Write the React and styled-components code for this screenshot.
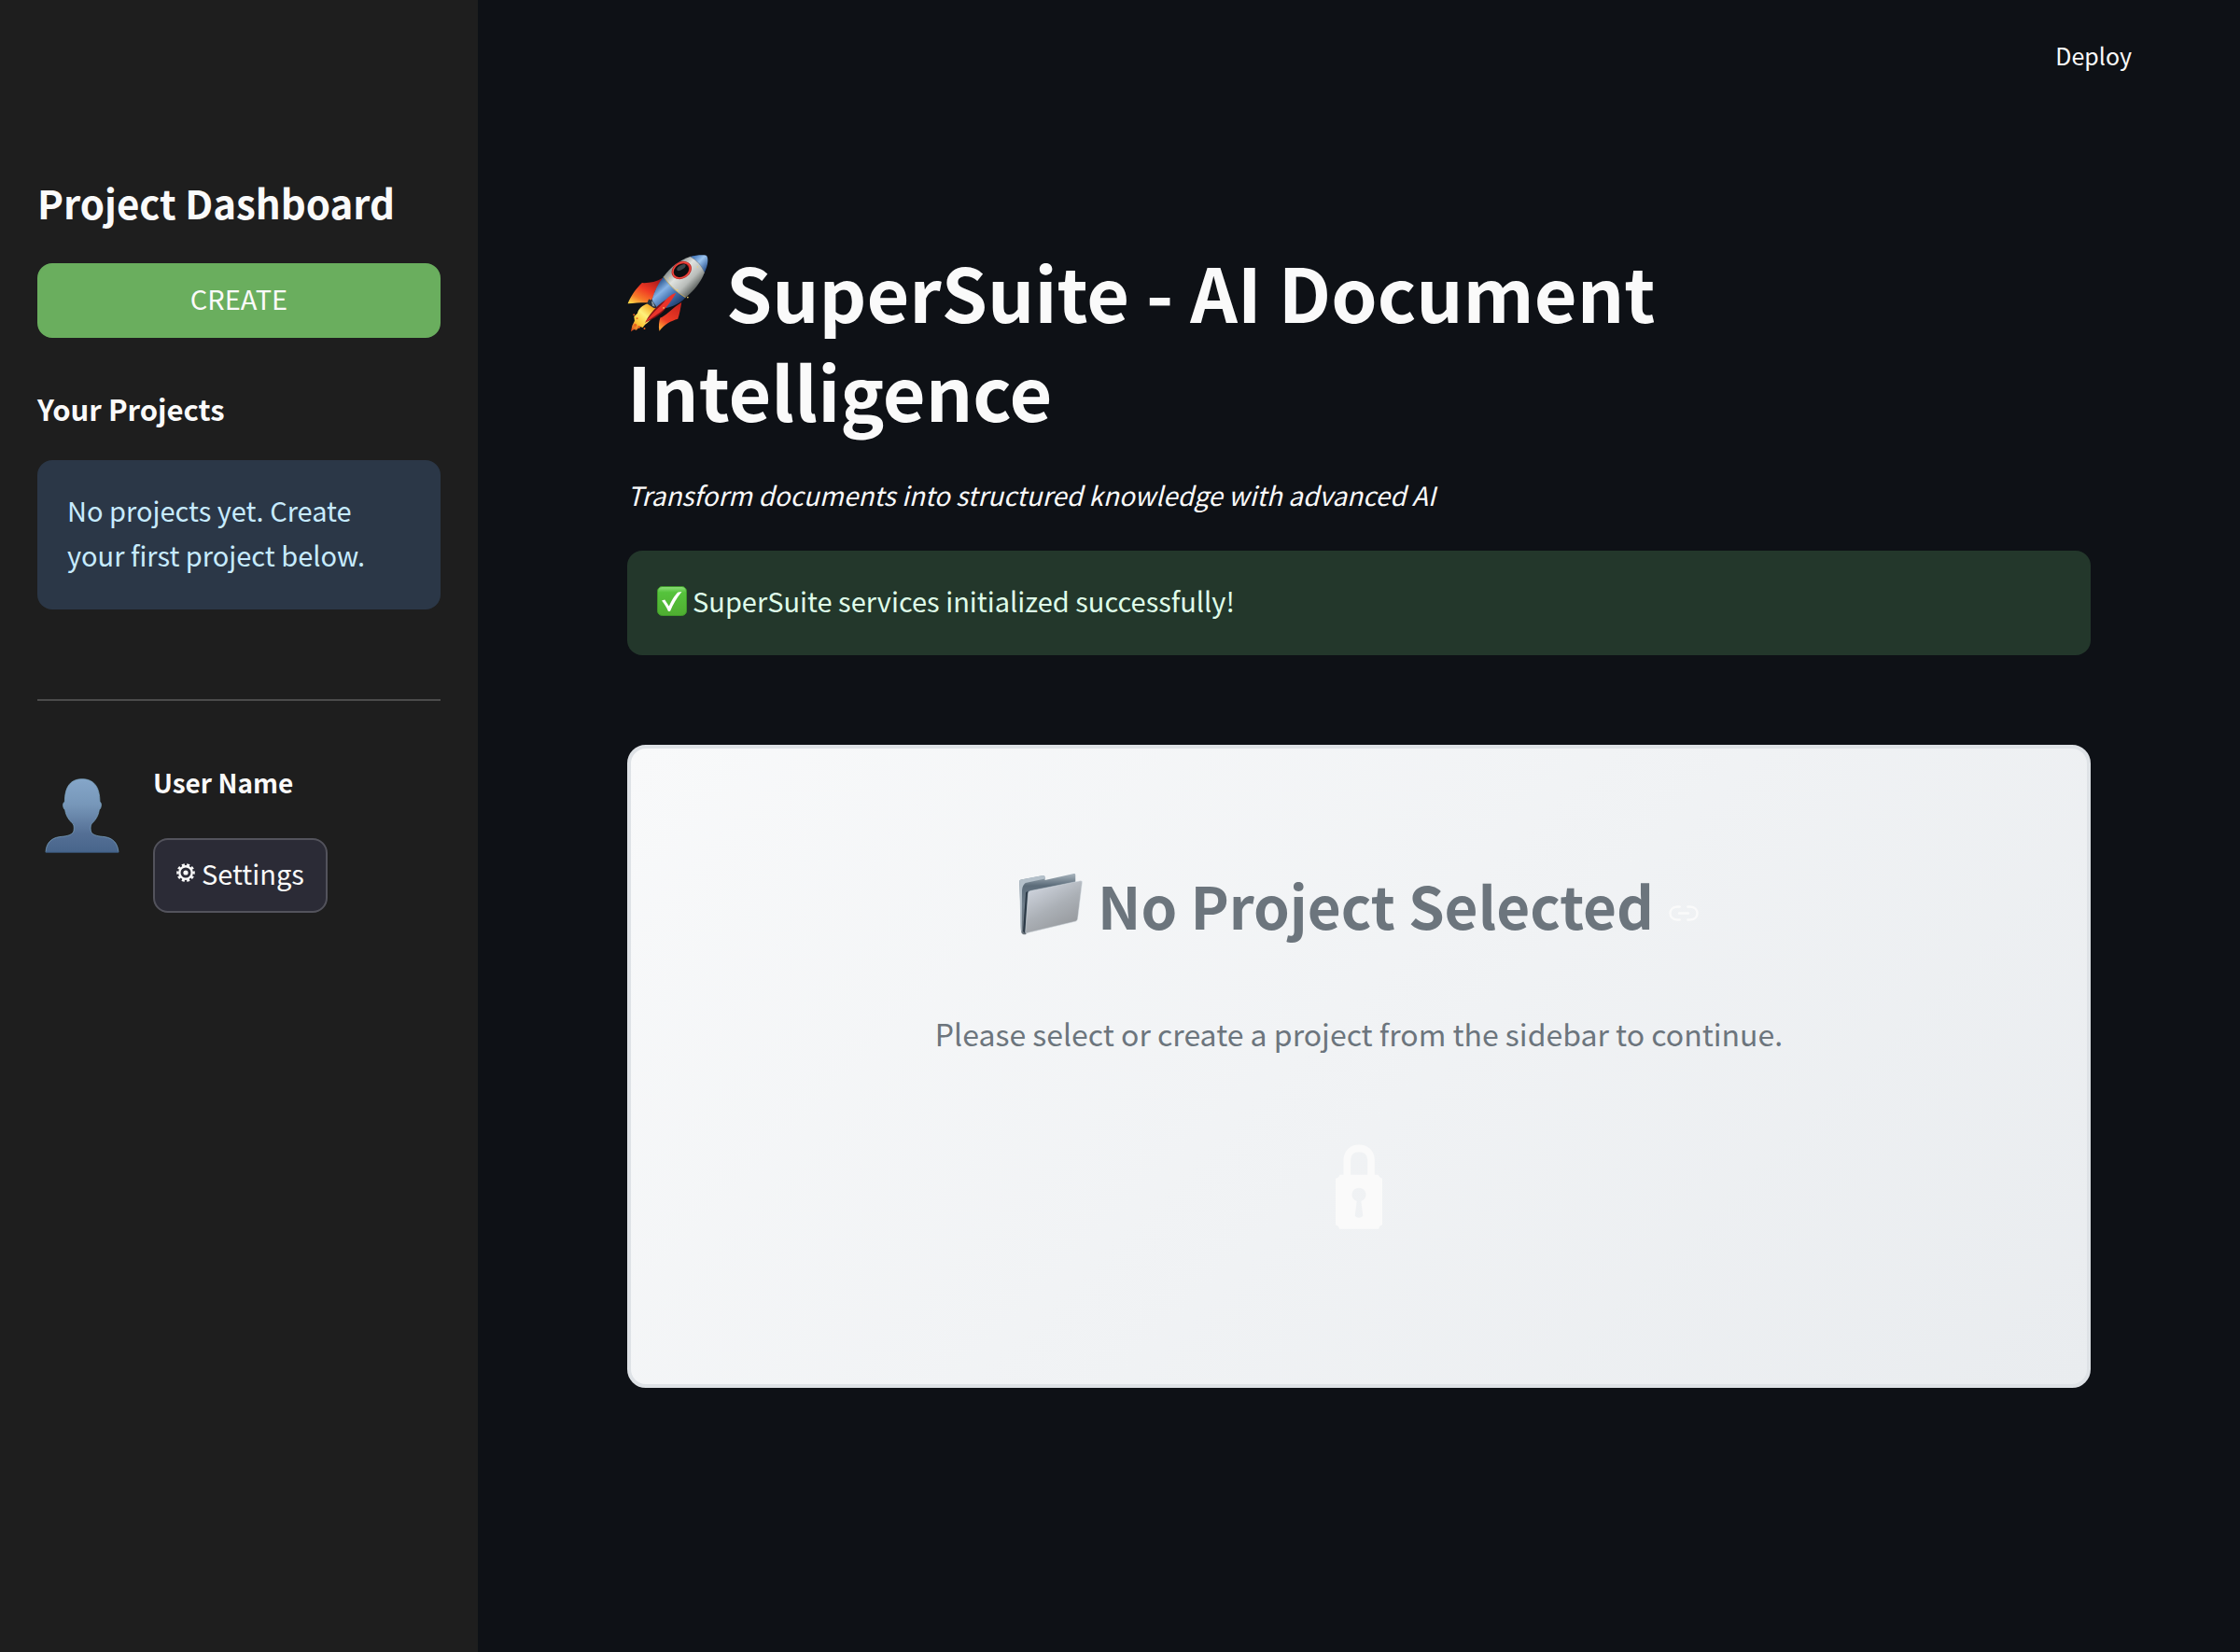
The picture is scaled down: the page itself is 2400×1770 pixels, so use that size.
import React from "react";
import styled, { createGlobalStyle } from "styled-components";

const GlobalStyle = createGlobalStyle`
  *, *::before, *::after { box-sizing: border-box; }
  body {
    margin: 0;
    background: #0e1116;
    color: #fafafa;
    font-family: "Noto Sans CJK SC", "Noto Sans", sans-serif;
    font-size: 29px;
    line-height: 48px;
  }
  h1, h2, h3, p { margin: 0; }
  button { font: inherit; color: inherit; cursor: pointer; }
`;

const Page = styled.div`
  display: flex;
  min-height: 100vh;
`;

const Sidebar = styled.aside`
  flex: 0 0 512px;
  padding: 188px 40px 40px;
  background: #1e1e1e;
`;

const SidebarTitle = styled.h2`
  font-size: 42px;
  line-height: 58px;
  font-weight: 600;
  margin-bottom: 36px;
`;

const Button = styled.button`
  display: flex;
  align-items: center;
  justify-content: center;
  gap: 7px;
  width: ${(p) => (p.$wide ? "100%" : "auto")};
  height: 80px;
  padding: 0 23px 6px;
  border: 2px solid ${(p) => (p.$primary ? "#6aae5e" : "#53535c")};
  border-radius: 16px;
  background: ${(p) => (p.$primary ? "#6aae5e" : "#2b2b36")};
`;

const SectionTitle = styled.h3`
  margin: 54px 0 33px;
  font-size: 31px;
  line-height: 44px;
  font-weight: 600;
`;

const Alert = styled.div`
  padding: 29px 32px 35px;
  border-radius: 16px;
  background: ${(p) => (p.$success ? "#23372b" : "#2b3747")};
  color: ${(p) => (p.$success ? "#dffde9" : "#c7ebff")};
`;

const Divider = styled.hr`
  height: 2px;
  margin: 96px 0 63px;
  border: 0;
  background: #4b4b4b;
`;

const UserRow = styled.div`
  display: flex;
  gap: 36px;
  padding-left: 8px;
`;

const Avatar = styled.svg`
  flex: none;
  width: 80px;
  height: 80px;
  margin-top: 20px;
`;

const UserInfo = styled.div`
  display: flex;
  flex-direction: column;
  align-items: flex-start;
  gap: 36px;
`;

const UserName = styled.strong`
  font-size: 28px;
  font-weight: 600;
`;

const Main = styled.main`
  flex: 1;
  min-width: 0;
`;

const Header = styled.header`
  display: flex;
  justify-content: flex-end;
  align-items: center;
  height: 117px;
  padding: 0 100px;
`;

const DeployButton = styled.button`
  padding: 0 16px;
  border: 0;
  background: none;
  font-size: 25px;
  line-height: 40px;
`;

const Content = styled.div`
  padding: 142px 160px 160px;
`;

const Title = styled.h1`
  padding-right: 40px;
  font-size: 79px;
  line-height: 106px;
  font-weight: 700;
`;

const RocketSvg = styled.svg`
  width: 88px;
  height: 84px;
  vertical-align: -10px;
`;

const Subtitle = styled.p`
  margin: 35px 0 36px;
  font-size: 28px;
  font-style: italic;
`;

const CheckSvg = styled.svg`
  width: 32px;
  height: 32px;
  margin-right: 6px;
  vertical-align: -4px;
`;

const EmptyCard = styled.section`
  margin-top: 96px;
  padding: 124px 60px 166px;
  border: 4px solid #dee2e6;
  border-radius: 20px;
  background: linear-gradient(135deg, #f8f9fa 0%, #e9ecef 100%);
  color: #6c757d;
  text-align: center;
`;

const CardTitle = styled.h2`
  font-size: 62px;
  line-height: 86px;
  font-weight: 600;
`;

const FolderSvg = styled.svg`
  width: 68px;
  height: 67px;
  margin-right: 2px;
  vertical-align: -6px;
`;

const AnchorLink = styled.a`
  margin-left: 16px;
  svg {
    width: 32px;
    height: 17px;
    vertical-align: 9px;
  }
`;

const CardText = styled.p`
  margin: 66px 0 90px;
  font-size: 32px;
  line-height: 58px;
`;

const LockSvg = styled.svg`
  display: block;
  width: 52px;
  height: 91px;
  margin: 0 auto;
`;

const GearSvg = styled.svg`
  width: 20px;
  height: 20px;
`;

function Rocket() {
  return (
    <RocketSvg viewBox="30 30 266 252" aria-hidden="true">
      <defs>
        <linearGradient id="finL" x1="0.8" y1="0" x2="0.1" y2="1">
          <stop offset="0" stopColor="#a3161a" />
          <stop offset="0.45" stopColor="#f03a24" />
          <stop offset="0.75" stopColor="#f77a28" />
          <stop offset="1" stopColor="#ffd648" />
        </linearGradient>
        <linearGradient id="finR" x1="0.8" y1="0" x2="0.3" y2="1">
          <stop offset="0" stopColor="#c7221d" />
          <stop offset="0.7" stopColor="#ee3d25" />
          <stop offset="1" stopColor="#f9a035" />
        </linearGradient>
        <linearGradient id="hull" gradientUnits="userSpaceOnUse" x1="175" y1="75" x2="250" y2="150">
          <stop offset="0" stopColor="#8d9391" />
          <stop offset="0.3" stopColor="#dfe2df" />
          <stop offset="0.65" stopColor="#b9bdba" />
          <stop offset="1" stopColor="#4e5350" />
        </linearGradient>
        <linearGradient id="blue" gradientUnits="userSpaceOnUse" x1="125" y1="125" x2="190" y2="200">
          <stop offset="0" stopColor="#2d588f" />
          <stop offset="0.3" stopColor="#86b3e6" />
          <stop offset="0.6" stopColor="#4775b2" />
          <stop offset="1" stopColor="#1e3b69" />
        </linearGradient>
        <linearGradient id="nose" gradientUnits="userSpaceOnUse" x1="250" y1="35" x2="292" y2="75">
          <stop offset="0" stopColor="#4c7fc0" />
          <stop offset="0.4" stopColor="#9cc5f0" />
          <stop offset="1" stopColor="#28528f" />
        </linearGradient>
        <linearGradient id="flame" x1="0.8" y1="0.1" x2="0.1" y2="1">
          <stop offset="0" stopColor="#f5a623" />
          <stop offset="0.35" stopColor="#fff07a" />
          <stop offset="0.7" stopColor="#fcc636" />
          <stop offset="1" stopColor="#d9471c" />
        </linearGradient>
      </defs>
      <path fill="url(#finL)" d="M146 106C124 120 100 124 78 123C60 140 42 165 32 190C55 188 82 186 98 187C112 180 118 160 120 150Z" />
      <path fill="url(#finR)" d="M206 186C203 205 200 222 194 240C172 246 150 258 134 279C131 262 133 248 137 236C152 232 175 205 206 186Z" />
      <path fill="url(#flame)" d="M96 190C80 196 66 206 63 222L52 232L54 246L46 262L42 281L52 274L60 276L70 264L80 268L88 258C108 244 122 226 124 205Z" />
      <g fill="#e8641f">
        <circle cx="52" cy="226" r="3" />
        <circle cx="56" cy="260" r="5" />
        <circle cx="68" cy="266" r="4" />
        <circle cx="86" cy="271" r="3" />
        <circle cx="62" cy="238" r="3" />
      </g>
      <path fill="#27323c" d="M100 176L118 184L128 206L116 204L94 190Z" />
      <path fill="#8296a5" d="M108 182L114 185L120 200L112 198Z" />
      <path fill="url(#blue)" d="M148 102C130 124 118 150 110 178L130 208C160 206 196 196 219 170Z" />
      <path fill="url(#hull)" d="M148 102C172 70 200 50 234 38C256 48 274 66 280 90C268 122 246 148 219 170C188 152 165 130 148 102Z" />
      <path fill="url(#nose)" d="M234 38C252 33 274 31 286 34C294 40 293 64 280 90C272 68 256 50 234 38Z" />
      <path fill="none" stroke="#c9a94e" strokeWidth="2.5" d="M148 102C165 130 188 152 219 170" />
      <path fill="none" stroke="#77808a" strokeWidth="2" d="M234 38C256 50 272 68 280 90" />
      <g transform="rotate(-32 206 82)">
        <ellipse cx="206" cy="82" rx="34" ry="27" fill="#b51c1c" />
        <ellipse cx="206" cy="82" rx="30" ry="23" fill="none" stroke="#ef4b40" strokeWidth="4" />
        <ellipse cx="205" cy="82" rx="26" ry="20" fill="#0b0e11" />
        <ellipse cx="210" cy="74" rx="16" ry="7" fill="#3b454b" />
      </g>
      <path fill="#7c1114" d="M180 164C145 180 108 210 88 252C115 240 150 222 156 200Z" />
      <path fill="#e9332a" d="M188 156C176 158 160 170 150 184C130 206 105 226 88 252C116 232 146 214 156 202C166 190 180 172 188 156Z" />
      <g fill="#f3d26a">
        <circle cx="148" cy="204" r="2.5" />
        <circle cx="192" cy="146" r="2.5" />
        <circle cx="226" cy="170" r="2.5" />
        <circle cx="168" cy="107" r="2" />
        <circle cx="258" cy="71" r="2" />
      </g>
    </RocketSvg>
  );
}

function Folder() {
  return (
    <FolderSvg viewBox="98 109 202 199" aria-hidden="true">
      <defs>
        <linearGradient id="folderBack" x1="0" y1="0" x2="0" y2="1">
          <stop offset="0" stopColor="#a9b5be" />
          <stop offset="0.2" stopColor="#5b6b79" />
          <stop offset="0.5" stopColor="#6f7e8b" />
          <stop offset="1" stopColor="#6b747c" />
        </linearGradient>
        <linearGradient id="folderFront" x1="0.1" y1="0" x2="0.7" y2="1">
          <stop offset="0" stopColor="#d6dbe5" />
          <stop offset="0.55" stopColor="#abb0b6" />
          <stop offset="1" stopColor="#94979b" />
        </linearGradient>
      </defs>
      <path fill="url(#folderBack)" d="M99 136Q99 132 104 131L174 118Q180 118 180 123V133L272 112Q277 111 277 116V150L118 306Q106 307 104 296Z" />
      <path fill="#b4c0ca" d="M99 136Q99 132 104 131L174 118Q180 118 180 123V128L118 142Q108 150 107 165L106 300Q102 290 102 280Z" />
      <path fill="#2c3a47" d="M125 168L119 172L110 296L117 303Z" />
      <path fill="url(#folderFront)" stroke="#d7dfe6" strokeWidth="1.5" d="M134 167L293 135Q300 134 298 142L284 256Q283 263 277 264L122 301Q117 302 118 297L127 174Q128 168 134 167Z" />
    </FolderSvg>
  );
}

function Person() {
  return (
    <Avatar viewBox="134 167 232 239" preserveAspectRatio="none" aria-hidden="true">
      <defs>
        <linearGradient id="person" x1="0" y1="0" x2="0" y2="1">
          <stop offset="0" stopColor="#85a6c9" />
          <stop offset="0.35" stopColor="#7797b9" />
          <stop offset="0.75" stopColor="#546f95" />
          <stop offset="1" stopColor="#48658b" />
        </linearGradient>
      </defs>
      <path
        fill="url(#person)"
        stroke="#7fa9c6"
        strokeWidth="2"
        d="M250 169C215 169 196 192 196 242C188 246 190 262 197 268C200 290 212 303 222 313C226 320 225 332 223 338C216 350 200 352 180 354C152 358 138 376 137 403H363C361 376 347 358 320 354C300 352 284 350 278 338C276 332 275 320 279 313C289 303 300 290 303 268C310 262 312 246 305 242C305 192 285 169 250 169Z"
      />
      <path stroke="#2d4b74" strokeWidth="3" d="M136 403H364" />
    </Avatar>
  );
}

function Gear() {
  return (
    <GearSvg viewBox="0 0 20 20" fill="none" stroke="#fafafa" aria-hidden="true">
      <circle cx="10" cy="10" r="6.7" strokeWidth="2.4" />
      <circle cx="10" cy="10" r="8.6" strokeWidth="2.4" pathLength="100" strokeDasharray="5.6 4.4" strokeDashoffset="2.8" />
      <circle cx="10" cy="10" r="2.6" fill="#fafafa" stroke="none" />
    </GearSvg>
  );
}

function Check() {
  return (
    <CheckSvg viewBox="0 0 32 32" aria-hidden="true">
      <defs>
        <linearGradient id="check" x1="0" y1="0" x2="0" y2="1">
          <stop offset="0" stopColor="#8fe07c" />
          <stop offset="0.2" stopColor="#55c33c" />
          <stop offset="1" stopColor="#4fae31" />
        </linearGradient>
      </defs>
      <rect x="0.5" y="0.5" width="31" height="31" rx="5" fill="url(#check)" stroke="#3f9a2b" />
      <path fill="#fff" d="M5 15.5L8.2 14.5L12.8 21.5C16 14.5 19.5 9 22.5 6.5L26.5 6C21 12.500 17 19.500 14 27H12C10 22.500 8 19 5 15.500Z" />
    </CheckSvg>
  );
}

function Lock() {
  return (
    <LockSvg viewBox="150 79 156 273" aria-hidden="true">
      <path fill="none" stroke="#fafafa" strokeWidth="23" d="M190 180V130C190 106 206 92 228 92S267 106 267 130V180" />
      <path
        fill="#fafafa"
        fillRule="evenodd"
        d="M166 177H290Q294 187 303 189V338Q294 341 291 351H166Q163 341 153 338V189Q163 187 166 177ZM228 219A22 22 0 0 0 221 262L215 309Q228 321 241 309L235 262A22 22 0 0 0 228 219Z"
      />
    </LockSvg>
  );
}

export default function App() {
  return (
    <>
      <GlobalStyle />
      <Page>
        <Sidebar>
          <SidebarTitle>Project Dashboard</SidebarTitle>
          <Button type="button" $primary $wide>CREATE</Button>
          <SectionTitle>Your Projects</SectionTitle>
          <Alert>No projects yet. Create your first project below.</Alert>
          <Divider />
          <UserRow>
            <Person />
            <UserInfo>
              <UserName>User Name</UserName>
              <Button type="button">
                <Gear />
                Settings
              </Button>
            </UserInfo>
          </UserRow>
        </Sidebar>
        <Main>
          <Header>
            <DeployButton type="button">Deploy</DeployButton>
          </Header>
          <Content>
            <Title>
              <Rocket /> SuperSuite - AI Document Intelligence
            </Title>
            <Subtitle>Transform documents into structured knowledge with advanced AI</Subtitle>
            <Alert $success role="status">
              <Check />
              SuperSuite services initialized successfully!
            </Alert>
            <EmptyCard>
              <CardTitle id="no-project-selected">
                <Folder /> No Project Selected
                <AnchorLink href="#no-project-selected" aria-label="Link to heading">
                  <svg viewBox="0 0 93 50" preserveAspectRatio="none" fill="none" stroke="#fafafa" strokeWidth="7" strokeLinecap="round">
                    <path d="M34 4.500H26C-3 4.500-3 45.500 26 45.500H34M59 4.500H67C96 4.500 96 45.500 67 45.500H59M32 25H61" />
                  </svg>
                </AnchorLink>
              </CardTitle>
              <CardText>Please select or create a project from the sidebar to continue.</CardText>
              <Lock />
            </EmptyCard>
          </Content>
        </Main>
      </Page>
    </>
  );
}
